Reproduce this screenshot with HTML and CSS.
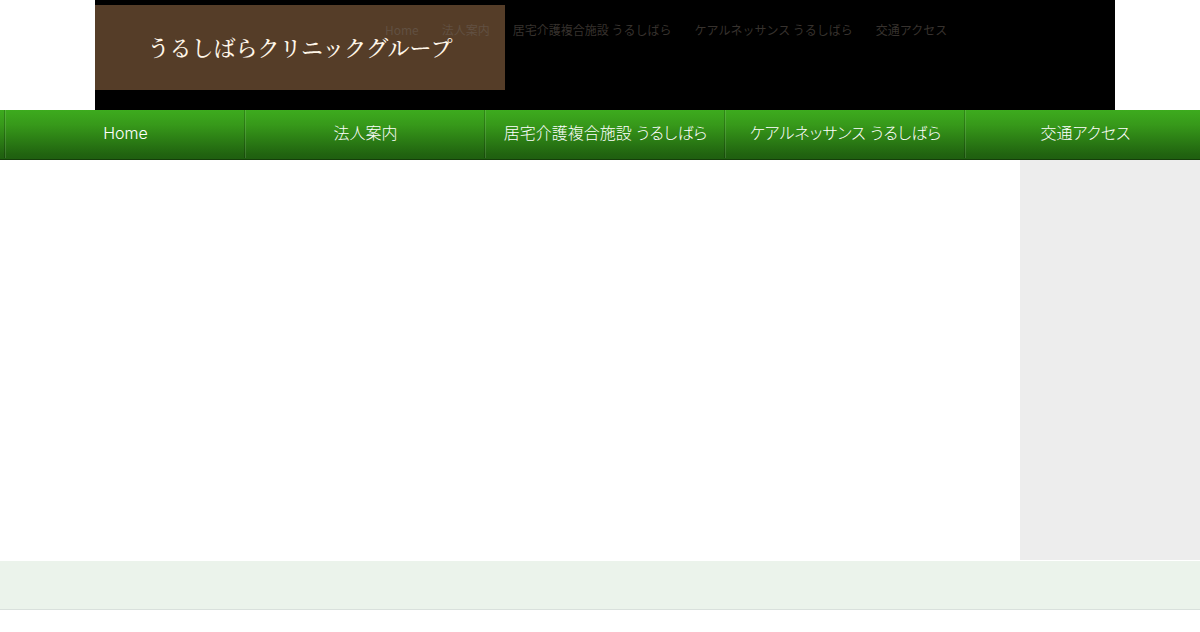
FILE: index.html
```
<!DOCTYPE html>
<html lang="ja">
<head>
  <meta charset="UTF-8">
  <meta name="viewport" content="width=device-width, initial-scale=1.0">
  <title>うるしばらクリニックグループ</title>
  <link rel="stylesheet" href="styles.css">
</head>
<body>
  <div class="page">
    <header class="header">
      <h1 class="logo"><a href="#">うるしばらクリニックグループ</a></h1>
      <nav class="sub-nav">
        <a href="#">Home</a>
        <a href="#">法人案内</a>
        <a href="#">居宅介護複合施設 うるしばら</a>
        <a href="#">ケアルネッサンス うるしばら</a>
        <a href="#">交通アクセス</a>
      </nav>
    </header>

    <div class="nav-bar">
      <nav class="main-nav">
        <a href="#">Home</a>
        <a href="#">法人案内</a>
        <a href="#">居宅介護複合施設 うるしばら</a>
        <a href="#">ケアルネッサンス うるしばら</a>
        <a href="#">交通アクセス</a>
      </nav>
    </div>

    <main class="content">
      <section class="main"></section>
      <aside class="side"></aside>
    </main>

    <div class="band"></div>
  </div>
</body>
</html>
```

FILE: styles.css
```
* {
  box-sizing: border-box;
}

body {
  margin: 0;
  background-color: #fff;
  font-family: "Noto Sans CJK JP", sans-serif;
  font-weight: 300;
  overflow-x: hidden;
}

a {
  color: inherit;
  text-decoration: none;
}

.page {
  min-width: 1210px;
}

.header {
  position: relative;
  max-width: 1020px;
  height: 110px;
  margin: 0 auto;
  padding-top: 5px;
  background-color: #000;
}

.logo {
  width: 410px;
  height: 85px;
  margin: 0;
  background-color: #553d28;
  color: #fff6e8;
  font-family: "Noto Serif CJK JP", "Noto Sans CJK JP", serif;
  font-size: 22px;
  font-weight: 500;
  line-height: 83px;
  text-align: center;
}

.logo a {
  display: block;
}

/* small menu runs over the right end of the logo */
.sub-nav {
  position: absolute;
  top: 20px;
  left: 290px;
  display: flex;
  gap: 23px;
  color: rgba(110, 100, 92, 0.5);
  font-size: 12px;
  font-weight: 400;
  line-height: 20px;
  white-space: nowrap;
}

.nav-bar {
  height: 50px;
  background: linear-gradient(#3dab1e, #37991a 30%, #216410 90%, #1f5f10);
  border-bottom: 1px solid #153f0a;
}

.main-nav {
  display: grid;
  grid-template-columns: repeat(5, 1fr);
  max-width: 1200px;
  margin: 0 auto;
}

.main-nav a {
  height: 48px;
  border-left: 1px solid rgba(255, 255, 255, 0.12);
  box-shadow: -1px 0 rgba(0, 0, 0, 0.2);
  color: #fff;
  font-family: Inter, "Noto Sans CJK JP", sans-serif;
  font-size: 16px;
  font-feature-settings: "palt";
  line-height: 46px;
  text-align: center;
  white-space: nowrap;
}

.content {
  display: grid;
  grid-template-columns: 1020px 1fr;
  min-height: 400px;
}

.side {
  background-color: #ededed;
}

.band {
  height: 49px;
  margin-top: 1px;
  background-color: #ebf3eb;
  border-bottom: 1px solid #d9e0dc;
}
```
